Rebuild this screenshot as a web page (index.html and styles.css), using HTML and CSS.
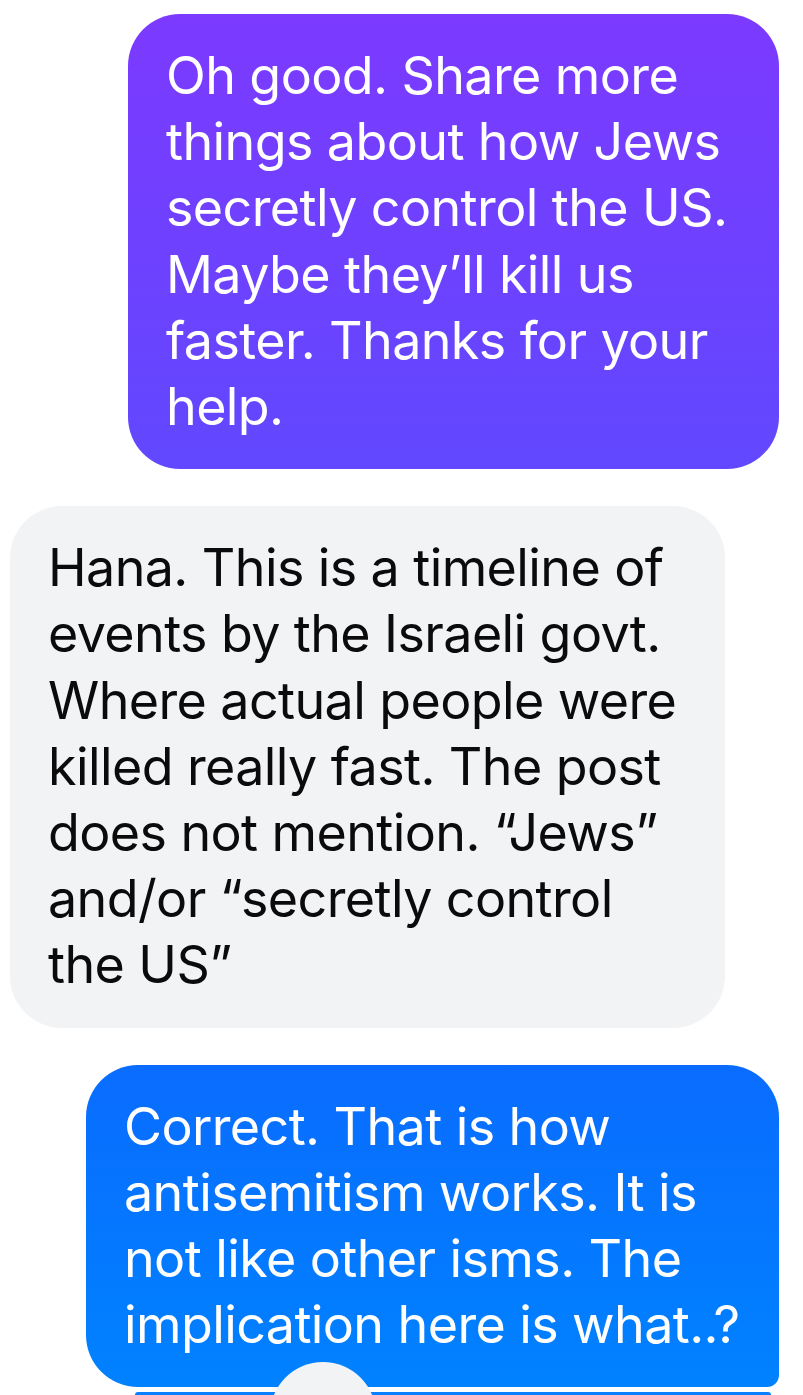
FILE: index.html
```html
<!DOCTYPE html>
<html lang="en">
<head>
<meta charset="utf-8">
<title>Chat</title>
<link rel="stylesheet" href="styles.css">
</head>
<body>
<div class="thread">
  <div class="bubble out purple">Oh good. Share more<br>things about how Jews<br>secretly control the US.<br>Maybe they’ll kill us<br>faster. Thanks for your<br>help.</div>
  <div class="bubble in">Hana. This is a timeline of<br>events by the Israeli govt.<br>Where actual people were<br>killed really fast. The post<br>does not mention. “Jews”<br>and/or “secretly control<br>the US”</div>
  <div class="bubble out blue last">Correct. That is how<br>antisemitism works. It is<br>not like other isms. The<br>implication here is what..?</div>
  <div class="next"></div>
</div>
<div class="scroll-btn"></div>
</body>
</html>
```

FILE: styles.css
```css
html, body {
  margin: 0;
  padding: 0;
  background: #ffffff;
  overflow: hidden;
}
body {
  width: 803px;
  height: 1395px;
  position: relative;
  font-family: "Inter", "Liberation Sans", sans-serif;
}
.thread {
  display: flex;
  flex-direction: column;
  padding: 14px 24px 0 0;
}
.bubble {
  font-size: 52px;
  line-height: 66.2px;
  letter-spacing: -0.6px;
  white-space: nowrap;
  padding: 29px 38px 29px;
  border-radius: 52px;
  box-sizing: border-box;
}
.bubble + .bubble {
  margin-top: 37px;
}
.out {
  align-self: flex-end;
  color: #ffffff;
}
.purple {
  width: 651px;
  background: linear-gradient(180deg, #7c3aff 0%, #6148ff 100%);
}
.in {
  align-self: flex-start;
  margin-left: 10px;
  width: 715px;
  background: #f2f3f5;
  color: #0b0b0c;
}
.blue {
  width: 693px;
  background: linear-gradient(180deg, #0a6cff 0%, #0082ff 100%);
}
.last {
  border-bottom-right-radius: 12px;
}
.next {
  align-self: flex-end;
  margin-top: 5px;
  margin-right: 8px;
  width: 636px;
  height: 40px;
  background: #0a80ff;
  border-radius: 3px 3px 0 0;
}
.scroll-btn {
  position: absolute;
  left: 270px;
  top: 1362px;
  width: 106px;
  height: 106px;
  border-radius: 50%;
  background: #f2f3f5;
}
```
